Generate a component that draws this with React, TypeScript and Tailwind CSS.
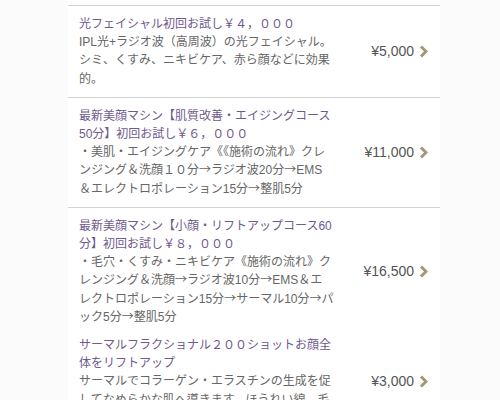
import React from "react";

type Course = {
  title: string;
  desc: string;
  price: string;
  top: string;
};

const courses: Course[] = [
  {
    title: "光フェイシャル初回お試し￥４，０００",
    desc: "IPL光+ラジオ波（高周波）の光フェイシャル。シミ、くすみ、ニキビケア、赤ら顔などに効果的。",
    price: "¥5,000",
    top: "border-t border-[#d3d3d3] pt-[9px]",
  },
  {
    title: "最新美顔マシン【肌質改善・エイジングコース50分】初回お試し￥６，０００",
    desc: "・美肌・エイジングケア《《施術の流れ》クレンジング＆洗顔１０分→ラジオ波20分→EMS＆エレクトロポレーション15分→整肌5分",
    price: "¥11,000",
    top: "border-t border-[#d3d3d3] pt-[9px]",
  },
  {
    title: "最新美顔マシン【小顔・リフトアップコース60分】初回お試し￥８，０００",
    desc: "・毛穴・くすみ・ニキビケア《施術の流れ》クレンジング＆洗顔→ラジオ波10分→EMS＆エレクトロポレーション15分→サーマル10分→パック5分→整肌5分",
    price: "¥16,500",
    top: "border-t border-[#d3d3d3] pt-[9px]",
  },
  {
    title: "サーマルフラクショナル２００ショットお顔全体をリフトアップ",
    desc: "サーマルでコラーゲン・エラスチンの生成を促してなめらかな肌へ導きます。ほうれい線、毛穴の開きにも。",
    price: "¥3,000",
    top: "pt-[1px]",
  },
];

// arrows come out of the CJK font so they take the wide form seen in the shot
function withArrows(text: string) {
  const parts = text.split("→");
  return parts.map((p, i) => (
    <React.Fragment key={i}>
      {p}
      {i < parts.length - 1 && (
        <span className="leading-[0]" style={{ fontFamily: '"Noto Sans CJK JP", sans-serif' }}>
          →
        </span>
      )}
    </React.Fragment>
  ));
}

function Chevron() {
  return (
    <svg width="9" height="13" viewBox="0 0 9 13" className="ml-[5px] shrink-0">
      <path d="M2 1.5 L7 6.5 L2 11.5" fill="none" stroke="#a39776" strokeWidth="3" strokeLinejoin="miter" />
    </svg>
  );
}

export default function App() {
  return (
    <main
      className="w-[500px] h-[400px] overflow-hidden bg-[#fbfbfb]"
      style={{ fontFamily: '"Liberation Sans", "Noto Sans CJK JP", sans-serif' }}
    >
      <div className="ml-[68px] w-[372px] bg-white">
        <div className="h-[5px]" />
        {courses.map((c) => (
          <div key={c.title} className={`flex items-center pl-[11px] pr-[12px] pb-[9px] ${c.top}`}>
            <div className="w-[255px] text-[12px] leading-[18.2px]">
              <p className="text-[#6f5a8e]">{c.title}</p>
              <p className="text-[#666]">{withArrows(c.desc)}</p>
            </div>
            <div className="flex-1 flex items-center justify-end text-[14px] text-[#555]">
              {c.price}
              <Chevron />
            </div>
          </div>
        ))}
      </div>
    </main>
  );
}
